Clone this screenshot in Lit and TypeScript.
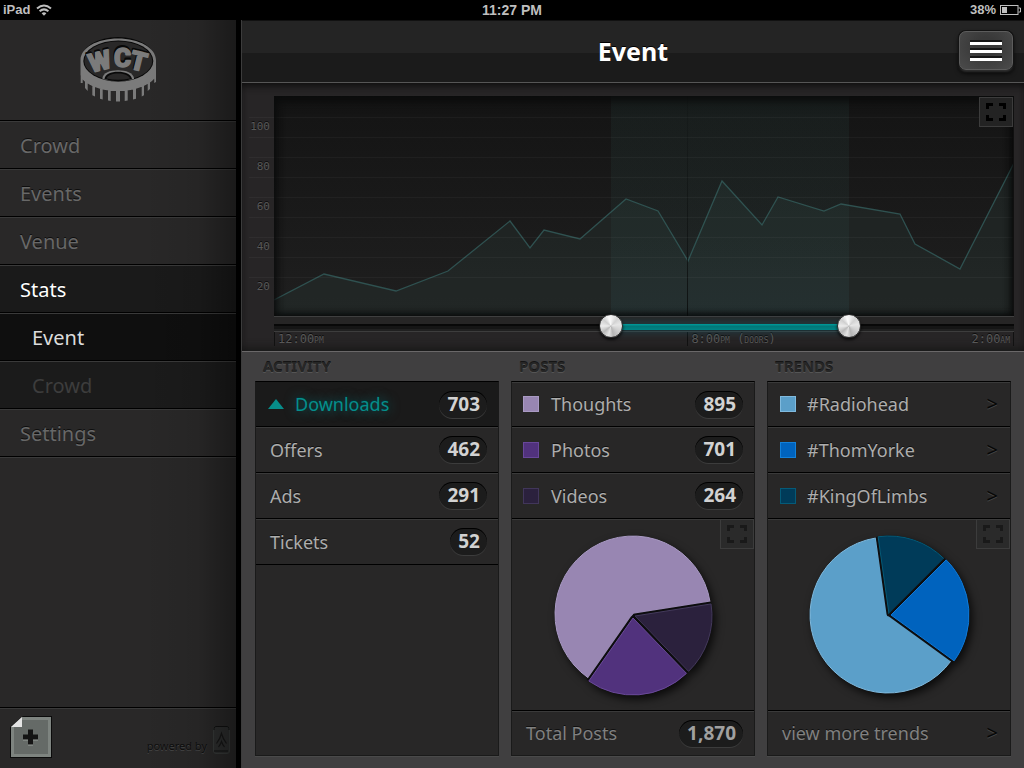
import { LitElement, html, css, svg, nothing } from "lit";
import { customElement, property, state } from "lit/decorators.js";
import { classMap } from "lit/directives/class-map.js";

interface Slice {
  from: number;
  to: number;
  r: number;
  dx: number;
  dy: number;
  fill: string;
  edge: string;
}

interface Row {
  label: string;
  count?: string;
  swatch?: string;
}

const POSTS: Row[] = [
  { label: "Thoughts", count: "895", swatch: "thoughts" },
  { label: "Photos", count: "701", swatch: "photos" },
  { label: "Videos", count: "264", swatch: "videos" },
];

const TRENDS: Row[] = [
  { label: "#Radiohead", swatch: "radiohead" },
  { label: "#ThomYorke", swatch: "thomyorke" },
  { label: "#KingOfLimbs", swatch: "kinglimbs" },
];

const ACTIVITY: Row[] = [
  { label: "Downloads", count: "703" },
  { label: "Offers", count: "462" },
  { label: "Ads", count: "291" },
  { label: "Tickets", count: "52" },
];

const POST_SLICES: Slice[] = [
  { from: 215, to: 441, r: 78, dx: 0, dy: -1, fill: "#9886b2", edge: "#a99ac3" },
  { from: 81, to: 136, r: 77, dx: 2, dy: 1, fill: "#2b213d", edge: "#443a5c" },
  { from: 136, to: 215, r: 77, dx: 0, dy: 3, fill: "#51327d", edge: "#6a4a99" },
];

const TREND_SLICES: Slice[] = [
  { from: 126, to: 351, r: 78, dx: -1, dy: 0, fill: "#5b9fc9", edge: "#80bade" },
  { from: -8, to: 45, r: 78, dx: 0, dy: -1, fill: "#003b59", edge: "#045a78" },
  { from: 45, to: 126, r: 78, dx: 2, dy: 0, fill: "#0063be", edge: "#0f7ad8" },
];

const TREND_LINE: [number, number][] = [
  [0, 204], [50, 178], [122, 195], [174, 175], [236, 125], [256, 152],
  [270, 134], [306, 143], [352, 103], [384, 115], [414, 165], [448, 85],
  [488, 129], [504, 101], [550, 115], [567, 108], [626, 118], [641, 148],
  [686, 173], [740, 67],
];

const expandIcon = html`<svg width="20" height="18" viewBox="0 0 20 18" aria-hidden="true">
  <path
    fill="currentColor"
    d="M0 0h7v3H3v3H0zM13 0h7v6h-3V3h-4zM0 12h3v3h4v3H0zM17 12h3v6h-7v-3h4z"
  />
</svg>`;

@customElement("pie-chart")
class PieChart extends LitElement {
  @property({ attribute: false }) slices: Slice[] = [];
  @property() label = "";

  static styles = css`
    :host {
      display: block;
    }
    .pie {
      display: block;
      width: 180px;
      height: 180px;
      overflow: visible;
    }
    .backing {
      filter: drop-shadow(3px 4px 4px rgba(0, 0, 0, 0.75));
    }
  `;

  private rim(s: Slice, deg: number) {
    const a = (deg * Math.PI) / 180;
    return `${(Math.sin(a) * s.r).toFixed(2)} ${(-Math.cos(a) * s.r).toFixed(2)}`;
  }

  private wedge(s: Slice) {
    const large = s.to - s.from > 180 ? 1 : 0;
    return `M0 0L${this.rim(s, s.from)}A${s.r} ${s.r} 0 ${large} 1 ${this.rim(s, s.to)}Z`;
  }

  private sides(s: Slice) {
    return `M${this.rim(s, s.from)}L0 0L${this.rim(s, s.to)}`;
  }

  render() {
    return html`<svg class="pie" viewBox="-90 -90 180 180" role="img" aria-label=${this.label}>
      <g class="backing">
        ${this.slices.map(
          (s) => svg`<path transform="translate(${s.dx} ${s.dy})" d=${this.wedge(s)} fill="#0d0d0f" stroke="#0d0d0f" />`
        )}
      </g>
      ${this.slices.map(
        (s) => svg`<g transform="translate(${s.dx} ${s.dy})">
          <path d=${this.sides(s)} fill="none" stroke="#0d0d0f" stroke-width="5" stroke-linejoin="round" />
          <path d=${this.wedge(s)} fill=${s.fill} stroke=${s.edge} stroke-width="1" />
        </g>`
      )}
    </svg>`;
  }
}

@customElement("stat-card")
class StatCard extends LitElement {
  @property() heading = "";
  @property({ attribute: false }) rows: Row[] = [];
  @property({ attribute: false }) slices: Slice[] = [];
  @property() total = "";
  @property() more = "";
  @property({ type: Number }) selected = -1;

  static styles = css`
    :host {
      display: flex;
      flex-direction: column;
      flex: 1;
      min-width: 0;
    }
    .heading {
      margin: 0;
      padding-left: 8px;
      font-size: 15px;
      line-height: 29px;
      font-weight: 700;
      color: #262626;
      text-shadow: 0 1px 0 #555, 0 -1px 0 #151515;
    }
    .card {
      flex: 1;
      display: flex;
      flex-direction: column;
      box-sizing: border-box;
      background: #282727;
      border: 1px solid #1a1a1a;
      border-top-color: #000;
      box-shadow: 0 1px 0 #4a4a4a;
    }
    .list {
      list-style: none;
      margin: 0;
      padding: 0;
    }
    .item {
      display: flex;
      height: 46px;
      box-sizing: border-box;
      border-bottom: 1px solid #000;
      box-shadow: inset 0 1px 0 #3a3a3a;
    }
    .item:first-child {
      height: 45px;
    }
    .item.selected {
      background: #1a1a1a;
      box-shadow: none;
    }
    .row {
      flex: 1;
      display: flex;
      align-items: center;
      min-width: 0;
      margin: 0;
      padding: 0 11px 0 14px;
      border: 0;
      background: none;
      font: inherit;
      font-size: 18px;
      line-height: 24px;
      color: #adadad;
      text-align: left;
      text-decoration: none;
      text-shadow: 0 -1px 0 #101010;
    }
    .row.keyed {
      padding-left: 11px;
    }
    a.row {
      padding-right: 12px;
    }
    a.row.keyed {
      padding-left: 12px;
    }
    .selected .row {
      padding-left: 12px;
      color: #068e8b;
      text-shadow: 0 0 12px rgba(0, 160, 170, 0.6), 0 -1px 0 #06282a;
    }
    .label {
      flex: 1;
      white-space: nowrap;
    }
    .up {
      width: 16px;
      height: 10px;
      margin-right: 11px;
      fill: #078d8a;
    }
    .swatch {
      box-sizing: border-box;
      width: 16px;
      height: 16px;
      margin-right: 12px;
      border: 1px solid;
    }
    a .swatch {
      margin-right: 11px;
    }
    .thoughts { background: #9886b2; border-color: #a99ac3; }
    .photos { background: #51327d; border-color: #68479a; }
    .videos { background: #2b213d; border-color: #41365a; }
    .radiohead { background: #5b9fc9; border-color: #80bade; }
    .thomyorke { background: #0063be; border-color: #1280da; }
    .kinglimbs { background: #003b59; border-color: #045a78; }
    .badge {
      padding: 0 7px 0 8px;
      border-radius: 14px;
      background: #1c1c1c;
      box-shadow: inset 0 1px 0 #000, 0 1px 0 #3c3c3c;
      font-size: 19px;
      line-height: 27px;
      font-weight: 700;
      color: #d2d2d2;
      text-shadow: none;
    }
    .arrow {
      font-size: 20px;
      color: #060606;
      text-shadow: 0 1px 0 #444;
    }
    .graph {
      flex: 1;
      display: grid;
      place-items: center;
      position: relative;
      box-shadow: inset 0 1px 0 #3a3a3a;
    }
    .expand {
      position: absolute;
      top: 0;
      right: 0;
      display: grid;
      place-items: center;
      width: 34px;
      height: 30px;
      padding: 0;
      border: 1px solid #3c3c3c;
      background: #2a2a2a;
      color: #191919;
    }
    .foot {
      display: flex;
      height: 45px;
      box-sizing: border-box;
      border-top: 1px solid #000;
      box-shadow: inset 0 1px 0 #3a3a3a;
    }
    .foot .row {
      color: #808080;
    }
    .foot .badge {
      color: #a0a0a0;
    }
  `;

  private row(r: Row, i: number) {
    const keyed = { row: true, keyed: !!r.swatch };
    const body = html`
      ${this.selected === i
        ? html`<svg class="up" viewBox="0 0 16 10" aria-hidden="true"><path d="M8 0l8 10H0z" /></svg>`
        : nothing}
      ${r.swatch ? html`<span class="swatch ${r.swatch}"></span>` : nothing}
      <span class="label">${r.label}</span>
      ${r.count
        ? html`<span class="badge">${r.count}</span>`
        : html`<span class="arrow" aria-hidden="true">&gt;</span>`}
    `;
    return html`<li class=${classMap({ item: true, selected: this.selected === i })}>
      ${r.count
        ? html`<button class=${classMap(keyed)} type="button">${body}</button>`
        : html`<a class=${classMap(keyed)} href="#trend">${body}</a>`}
    </li>`;
  }

  render() {
    return html`
      <h2 class="heading">${this.heading}</h2>
      <section class="card">
        <ul class="list">
          ${this.rows.map((r, i) => this.row(r, i))}
        </ul>
        ${this.slices.length
          ? html`<div class="graph">
              <pie-chart .slices=${this.slices} .label=${this.heading}></pie-chart>
              <button class="expand" type="button" aria-label="Expand chart">${expandIcon}</button>
            </div>`
          : nothing}
        ${this.total
          ? html`<div class="foot">
              <div class="row"><span class="label">Total Posts</span><span class="badge">${this.total}</span></div>
            </div>`
          : nothing}
        ${this.more
          ? html`<div class="foot">
              <a class="row" href="#trends"
                ><span class="label">${this.more}</span><span class="arrow" aria-hidden="true">&gt;</span></a
              >
            </div>`
          : nothing}
      </section>
    `;
  }
}

@customElement("time-chart")
class TimeChart extends LitElement {
  @state() private start = 454;
  @state() private end = 786;

  static styles = css`
    :host {
      display: block;
      padding: 13px 10px 5px 7px;
      background: #272526;
      box-shadow: inset 0 6px 8px -4px #0a0a0a, inset 0 -8px 10px -6px #151515;
      font-family: "DejaVu Sans Mono", monospace;
      font-size: 11px;
      color: #585858;
    }
    .frame {
      display: grid;
      grid-template-columns: 25px 1fr;
    }
    .ruled {
      background-image: repeating-linear-gradient(
        to bottom,
        rgba(255, 255, 255, 0.035) 0 1px,
        transparent 1px 20px
      );
      background-position: 0 21px;
      background-size: 100% 161px;
      background-repeat: no-repeat;
    }
    .scale {
      display: flex;
      flex-direction: column;
      padding: 11px 4px 0 0;
      text-align: right;
      line-height: 40px;
      text-shadow: 0 -1px 0 #0c0c0c;
    }
    .plot {
      position: relative;
      height: 220px;
      background: linear-gradient(#141414, #1f1f1f);
    }
    .line {
      position: absolute;
      inset: 0;
      width: 100%;
      height: 100%;
    }
    .window {
      position: absolute;
      top: 0;
      bottom: 0;
      background: linear-gradient(rgba(50, 90, 85, 0.13) 60%, rgba(50, 85, 92, 0.2));
    }
    .doors {
      position: absolute;
      top: 0;
      bottom: -8px;
      left: 56%;
      width: 1px;
      margin-left: -1px;
      background: linear-gradient(rgba(10, 14, 14, 0.2), #0e1111);
    }
    .overlay {
      position: absolute;
      inset: 0;
      box-shadow: inset 0 8px 12px -4px #0a0b0b, inset 4px 0 8px -2px #0c0d0d,
        inset -5px 0 8px -3px #070707, inset 0 -6px 8px -5px #0a0b0b, inset -1px 0 0 #333;
    }
    .expand {
      position: absolute;
      top: 1px;
      right: 1px;
      display: grid;
      place-items: center;
      width: 34px;
      height: 30px;
      padding: 0;
      border: 1px solid #3c3c3c;
      background: #232323;
      color: #000;
    }
    .range {
      grid-column: 2;
      position: relative;
      height: 16px;
      border-top: 1px solid #3f3f3f;
      border-bottom: 1px solid #3d3d3d;
      box-sizing: border-box;
      background: linear-gradient(#262525 0 7px, #080808 7px 9px, #151515 9px 12px, #202020 12px);
    }
    .fill {
      position: absolute;
      top: 7px;
      height: 6px;
      background: linear-gradient(#009c9c, #007879 40%, #008486);
      box-shadow: 0 0 8px 2px rgba(20, 110, 125, 0.35);
    }
    .handle {
      -webkit-appearance: none;
      appearance: none;
      position: absolute;
      left: 0;
      top: -3px;
      width: 100%;
      height: 24px;
      margin: 0;
      background: none;
      pointer-events: none;
    }
    .handle::-webkit-slider-thumb {
      -webkit-appearance: none;
      width: 24px;
      height: 24px;
      border: 1px solid #2b2b2b;
      border-radius: 50%;
      pointer-events: auto;
      background: conic-gradient(#f4f4f4, #d2d2d2 12%, #e6e6e6 22%, #cfcfcf 34%, #b4b4b4 46%, #e4e4e4 54%, #b9b9b9 64%, #ececec 75%, #cfcfcf 86%, #fafafa 96%, #f4f4f4);
      box-shadow: 0 2px 3px rgba(0, 0, 0, 0.7);
    }
    .times {
      grid-column: 2;
      display: grid;
      grid-template-columns: 56fr 44fr;
      line-height: 14px;
      font-size: 12px;
      font-variant: small-caps;
      text-shadow: 0 -1px 0 #0c0c0c;
    }
    .time {
      padding-left: 3px;
      border-left: 1px solid #111;
      display: flex;
      justify-content: space-between;
    }
    .close {
      margin-left: -1px;
      padding-right: 3px;
      border-right: 1px solid #111;
    }
  `;

  private at(v: number) {
    return `calc(12px + (100% - 24px) * ${v / 1000})`;
  }

  render() {
    const pts = TREND_LINE.map((p) => p.join(" ")).join("L");
    const right = `calc(12px + (100% - 24px) * ${1 - this.end / 1000})`;
    return html`
      <div class="frame">
        <div class="scale ruled">
          ${[100, 80, 60, 40, 20].map((n) => html`<span>${n}</span>`)}
        </div>
        <div class="plot">
          <svg class="line" viewBox="0 0 740 220" preserveAspectRatio="none" role="img" aria-label="Attendance over time">
            <path d="M${pts}L740 220L0 220Z" fill="#2b3b37" fill-opacity="0.3" />
            <path d="M${pts}" fill="none" stroke="#2f5150" stroke-width="1.3" vector-effect="non-scaling-stroke" />
          </svg>
          <div class="window" style="left:${this.at(this.start)};right:${right}"></div>
          <div class="doors"></div>
          <div class="overlay ruled"></div>
          <button class="expand" type="button" aria-label="Expand graph">${expandIcon}</button>
        </div>
        <div class="range">
          <div class="fill" style="left:${this.at(this.start)};right:${right}"></div>
          <input class="handle" type="range" min="0" max="1000" aria-label="Start time"
            .value=${String(this.start)}
            @input=${(e: Event) => (this.start = +(e.target as HTMLInputElement).value)} />
          <input class="handle" type="range" min="0" max="1000" aria-label="End time"
            .value=${String(this.end)}
            @input=${(e: Event) => (this.end = +(e.target as HTMLInputElement).value)} />
        </div>
        <div class="times">
          <span class="time">12:00pm</span>
          <span class="time close"><span>8:00pm (doors)</span><span>2:00am</span></span>
        </div>
      </div>
    `;
  }
}

@customElement("app-root")
class AppRoot extends LitElement {
  static styles = css`
    :host {
      display: flex;
      flex-direction: column;
      min-height: 100vh;
      background: #000;
      font-family: "Noto Sans", "Open Sans", sans-serif;
    }
    .status {
      display: grid;
      grid-template-columns: 1fr auto 1fr;
      align-items: center;
      height: 20px;
      padding: 0 3px;
      font: bold 13px/18px "Liberation Sans", Arial, sans-serif;
      color: #bfbfbf;
    }
    .clock {
      font-size: 14px;
    }
    .device {
      display: flex;
      align-items: center;
      gap: 6px;
    }
    .battery {
      display: flex;
      align-items: center;
      justify-content: flex-end;
      gap: 4px;
    }
    .body {
      flex: 1;
      display: flex;
    }
    .side {
      position: relative;
      display: flex;
      flex-direction: column;
      width: 236px;
      flex: none;
      background: #292828;
    }
    .side::after {
      content: "";
      position: absolute;
      inset: 0;
      pointer-events: none;
      background: linear-gradient(to right, transparent 60%, rgba(0, 0, 0, 0.08) 84%, rgba(0, 0, 0, 0.36));
    }
    .brand {
      display: flex;
      justify-content: center;
      box-sizing: border-box;
      height: 101px;
      padding-top: 17px;
      border-bottom: 1px solid #000;
    }
    .menu {
      list-style: none;
      margin: 0;
      padding: 0;
    }
    .link {
      display: block;
      height: 47px;
      border-bottom: 1px solid #000;
      box-shadow: inset 0 1px 0 #3a3a3a;
      padding-left: 20px;
      font-size: 20px;
      line-height: 50px;
      color: #686868;
      text-decoration: none;
      text-shadow: 0 -1px 0 #0e0e0e;
    }
    .open {
      background: #1a1a1a;
      color: #fff;
    }
    .sub {
      padding-left: 32px;
      background: #1b1b1b;
      color: #3d3d3d;
      text-shadow: none;
    }
    .current {
      background: #0f0f0f;
      color: #dcdcdc;
    }
    .end {
      flex: 1;
      box-shadow: inset 0 1px 0 #3a3a3a;
    }
    .tools {
      display: flex;
      align-items: center;
      justify-content: space-between;
      box-sizing: border-box;
      height: 61px;
      padding: 0 6px 2px 10px;
      border-top: 1px solid #000;
      box-shadow: inset 0 1px 0 #3a3a3a;
    }
    .add {
      padding: 0;
      border: 0;
      background: none;
      line-height: 0;
    }
    .powered {
      display: flex;
      align-items: center;
      gap: 6px;
      padding-top: 18px;
      font-size: 11px;
      line-height: 30px;
      color: #0e0e0e;
      text-shadow: 0 1px 0 #454545;
    }
    .seal {
      margin-top: -12px;
    }
    .main {
      flex: 1;
      display: flex;
      flex-direction: column;
      min-width: 0;
      margin-left: 5px;
      border-left: 1px solid #3c3c3c;
      background: #403f40;
    }
    .top {
      display: grid;
      grid-template-columns: 1fr auto 1fr;
      align-items: center;
      box-sizing: border-box;
      height: 63px;
      padding: 0 11px 2px;
      border-top: 1px solid #111;
      border-bottom: 1px solid #565656;
      background: linear-gradient(#242424 0 32px, #1b1b1b 32px);
    }
    .title {
      grid-column: 2;
      margin: 0;
      font-size: 25px;
      line-height: 34px;
      font-weight: 700;
      color: #fff;
      text-shadow: 0 -1px 0 #000;
    }
    .burger {
      justify-self: end;
      display: grid;
      place-items: center;
      width: 54px;
      height: 39px;
      padding: 0;
      border: 1px solid #5c5c5c;
      border-radius: 7px;
      background: radial-gradient(ellipse at 50% 40%, #393939 30%, #4b4b4b);
      box-shadow: 0 2px 2px #2f2f2f, 0 3px 5px #000, 0 0 0 1px #151515;
    }
    .panels {
      flex: 1;
      display: flex;
      gap: 12px;
      padding: 0 13px 12px;
      border-top: 1px solid #6a6869;
      background: #403f40;
    }
  `;

  render() {
    return html`
      <header class="status">
        <span class="device">iPad
          <svg width="16" height="12" viewBox="0 0 16 12" fill="none" stroke="#bfbfbf" stroke-width="2" aria-label="Wi-Fi">
            <path d="M1 4.6Q8 -1.6 15 4.6M3.6 7.3Q8 3.4 12.4 7.3" />
            <path d="M8 11.8L5.6 9.2Q8 7.2 10.4 9.2z" fill="#bfbfbf" stroke="none" />
          </svg>
        </span>
        <span class="clock">11:27 PM</span>
        <span class="battery">38%
          <svg width="21" height="10" viewBox="0 0 21 10" aria-label="Battery">
            <rect x=".5" y=".5" width="17.5" height="9" fill="none" stroke="#bfbfbf" />
            <path d="M2 2h5v6H2z" fill="#bfbfbf" />
            <path d="M18.500 3H20.500V7H18.500" fill="none" stroke="#bfbfbf" />
          </svg>
        </span>
      </header>
      <div class="body">
        <aside class="side">
          <div class="brand">
            <svg width="76" height="66" viewBox="0 0 76 66" role="img" aria-label="WCT">
              <ellipse cx="38" cy="22.500" rx="37" ry="22.500" fill="#080808" />
              <path
                fill="#7b7b7b"
                d="M.5 23C.5 11 17 1.500 38 1.500S76 11 76 23V38C74 46 58 54 38 54S2 46 .5 38z
                  M.7 30h2v16h-2zM5 36h2.700v18L5 51zM12.300 44H15v15.500l-2.700-1.200zM20 48h2.700v14.500l-2.700-.8z
                  M28 50h2.700v14l-2.700-.4zM36 50h4v14.500h-4zM44.700 50h3v13.600l-3 .4zM53 48h3v13.700l-3 .8z
                  M61.700 44H64v14.300l-2.300 1.200zM67.700 38H70v14l-2.300 2zM74.200 30H76v15l-1.800 1z"
              />
              <ellipse cx="38.300" cy="24" rx="35" ry="20.500" fill="#080808" />
              <ellipse cx="38.300" cy="24" rx="34" ry="19.500" fill="#292828" />
              <path d="M22.500 42V41C23 36 30 33.300 38 33.300S53 36 54 41V42Q38 46 22.500 42z" fill="#7b7b7b" />
              <path d="M24.500 42C25 37 31 34.800 38 34.800S51 37 52 42Q38 46.500 24.500 42z" fill="#080808" />
              <path d="M26.500 41.500C28 38 32 36.500 38 36.500S48.500 38 50 41.500Q38 44 26.500 41.500z" fill="#292828" />
              <g font-family="Roboto, sans-serif" font-weight="900" font-size="26" text-anchor="middle" stroke-linejoin="round">
                <g fill="#080808" stroke="#080808" stroke-width="2" aria-hidden="true">
                  <text transform="translate(21.500 31.500) rotate(-14)">W</text>
                  <text x="42" y="28">C</text>
                  <text transform="translate(56 31.500) rotate(14)">T</text>
                </g>
                <g fill="#7b7b7b" stroke="#7b7b7b" stroke-width="1.500">
                  <text transform="translate(22 33) rotate(-14)">W</text>
                  <text x="42.500" y="29.500">C</text>
                  <text transform="translate(56.500 33) rotate(14)">T</text>
                </g>
              </g>
            </svg>
          </div>
          <nav aria-label="Main">
            <ul class="menu">
              <li><a class="link" href="#crowd">Crowd</a></li>
              <li><a class="link" href="#events">Events</a></li>
              <li><a class="link" href="#venue">Venue</a></li>
              <li>
                <a class="link open" href="#stats">Stats</a>
                <ul class="menu">
                  <li><a class="link sub current" href="#stats-event" aria-current="page">Event</a></li>
                  <li><a class="link sub" href="#stats-crowd">Crowd</a></li>
                </ul>
              </li>
              <li><a class="link" href="#settings">Settings</a></li>
            </ul>
          </nav>
          <div class="end"></div>
          <div class="tools">
            <button class="add" type="button" aria-label="Add note">
              <svg width="42" height="42" viewBox="0 0 42 42">
                <path d="M13 0h29v42H0V11z" fill="#0b0b0b" />
                <path d="M12 1h29v40H1V11z" fill="#7e8480" />
                <path d="M12 4h26v34H4V11h8z" fill="#656a67" />
                <path d="M18 14.500h5v5h5v5h-5v5h-5v-5h-5v-5h5z" fill="#9a9f9b" />
                <path d="M18 13.500h5v5h5v5h-5v5h-5v-5h-5v-5h5z" fill="#141414" />
                <path d="M12 1V11H1z" fill="#e4e4e4" />
              </svg>
            </button>
            <span class="powered">powered by
              <svg class="seal" width="17" height="28" viewBox="0 0 17 28" fill="none" aria-hidden="true">
                <rect x=".5" y=".5" width="16" height="27" rx="2.500" fill="#2d2e2e" stroke="#373a39" />
                <path d="M1 4V2.500Q1 .5 3 .5H14Q16 .5 16 2.500V4M1 25h14" stroke="#101010" />
                <path d="M3.500 17.500Q7 13 8.500 7.500Q10 13 13.500 17.500M5.500 21Q7.500 18.500 8.500 15.500Q9.500 18.500 11.500 21" stroke="#161616" stroke-width="1.200" />
              </svg>
            </span>
          </div>
        </aside>
        <main class="main">
          <div class="top">
            <h1 class="title">Event</h1>
            <button class="burger" type="button" aria-label="Menu">
              <svg width="32" height="21" viewBox="0 0 32 21">
                <path d="M0 0h32v2H0zM0 8h32v2H0zM0 16h32v2H0z" fill="#161616" />
                <path d="M0 2h32v3H0zM0 10h32v3H0zM0 18h32v3H0z" fill="#fff" />
              </svg>
            </button>
          </div>
          <time-chart></time-chart>
          <div class="panels">
            <stat-card heading="ACTIVITY" .rows=${ACTIVITY} .selected=${0}></stat-card>
            <stat-card heading="POSTS" .rows=${POSTS} .slices=${POST_SLICES} total="1,870"></stat-card>
            <stat-card heading="TRENDS" .rows=${TRENDS} .slices=${TREND_SLICES} more="view more trends"></stat-card>
          </div>
        </main>
      </div>
    `;
  }
}
